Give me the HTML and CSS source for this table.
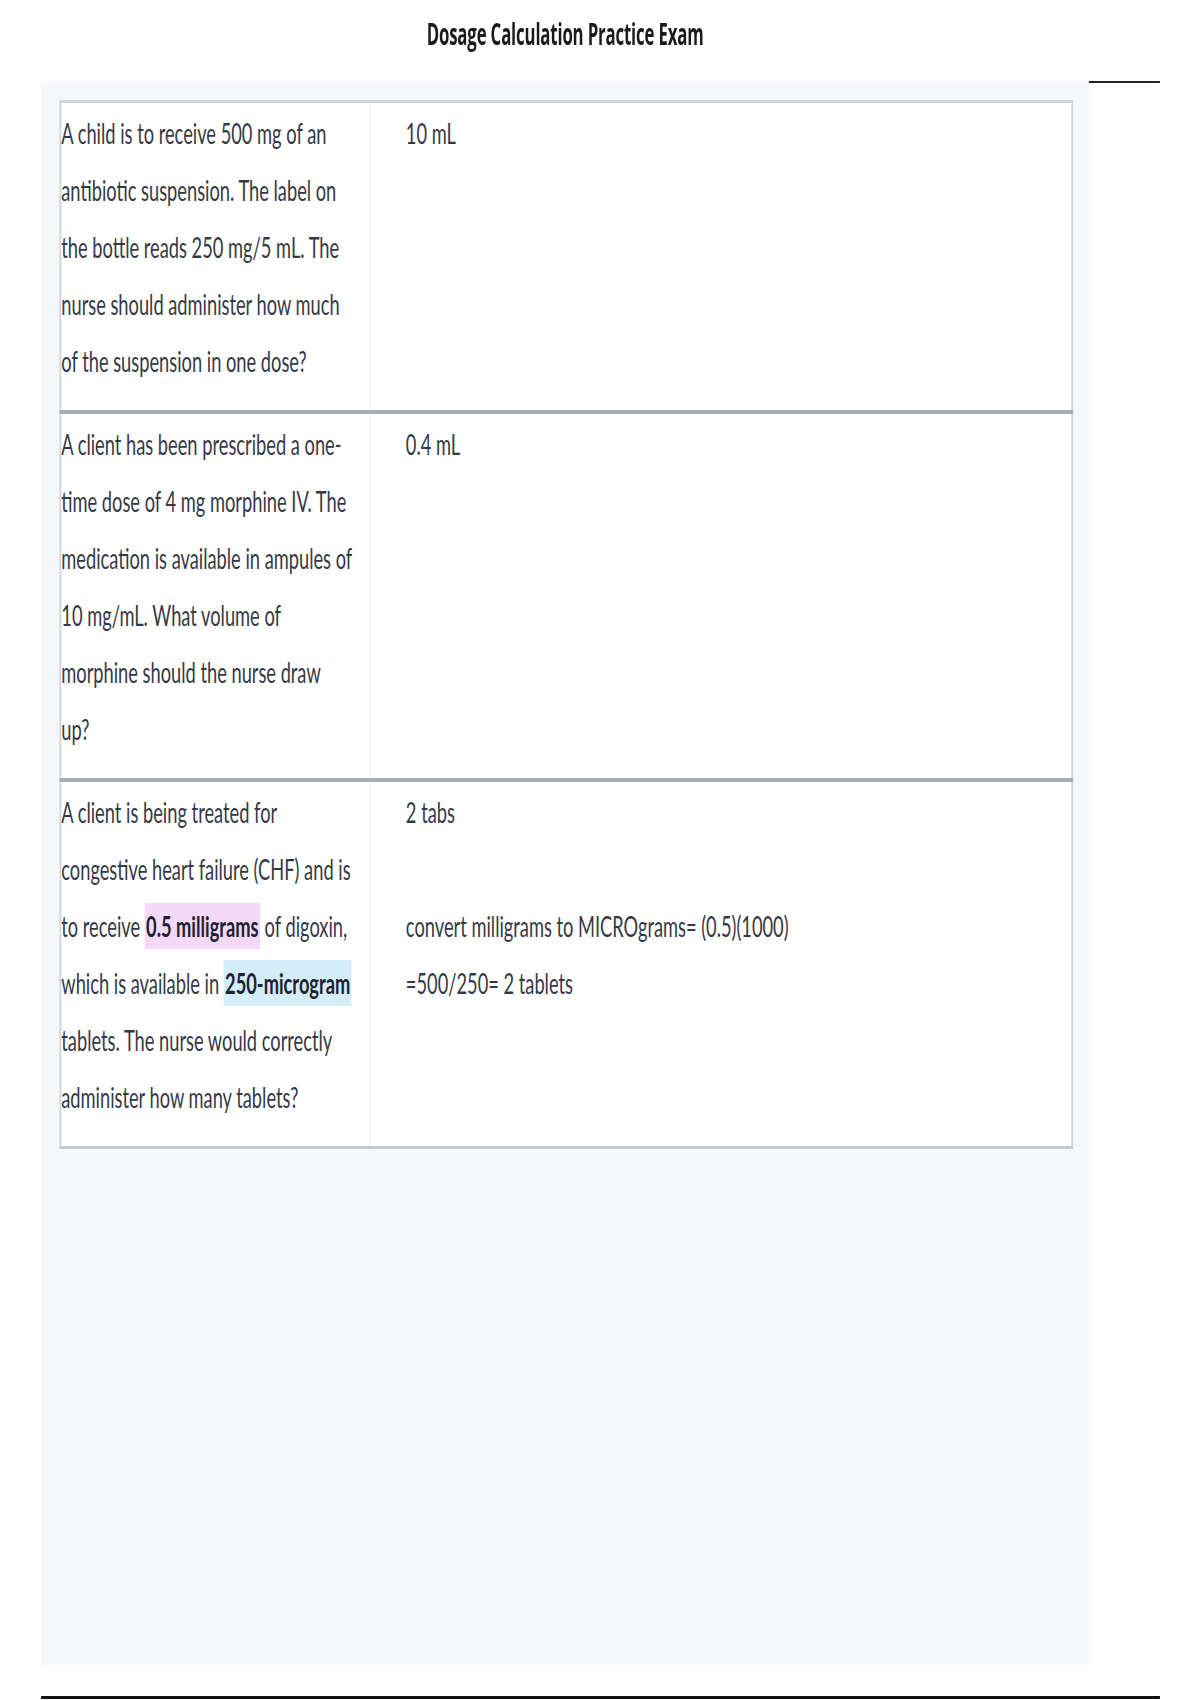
FILE: index.html
```html
<!DOCTYPE html>
<html lang="en">
<head>
  <meta charset="UTF-8">
  <title>Dosage Calculation Practice Exam</title>
  <link rel="stylesheet" href="styles.css">
</head>
<body>

  <div class="page">
    <div class="title-bar">
      <h1 class="title">Dosage Calculation Practice Exam</h1>
    </div>

    <div class="layout">
      <!-- Termos e definicoes -->
      <main class="panel">
        <table class="terms">
          <colgroup>
            <col class="col-term">
            <col class="col-def">
          </colgroup>
          <tr>
            <td class="term">A child is to receive 500 mg of an antibiotic suspension. The label on the bottle reads 250 mg/5 mL. The nurse should administer how much of the suspension in one dose?</td>
            <td class="def">10 mL</td>
          </tr>
          <tr>
            <td class="term">A client has been prescribed a one-time dose of 4 mg morphine IV. The medication is available in ampules of 10 mg/mL. What volume of morphine should the nurse draw<br>up?</td>
            <td class="def">0.4 mL</td>
          </tr>
          <tr>
            <td class="term">A client is being treated for congestive heart failure (CHF) and is to receive <b class="hl hl-pink">0.5 milligrams</b> of digoxin, which is available in <b class="hl hl-blue">250-microgram</b> tablets. The nurse would correctly administer how many tablets?</td>
            <td class="def">2 tabs<br><br>convert milligrams to MICROgrams= (0.5)(1000)<br>=500/250= 2 tablets</td>
          </tr>
        </table>
      </main>
      <div class="aside"></div>
    </div>

    <div class="footer-rule"></div>
  </div>

</body>
</html>
```

FILE: styles.css
```css
* {
  box-sizing: border-box;
}

html, body {
  margin: 0;
  padding: 0;
  background: #fff;
  overflow: hidden;
  height: 1700px;
}

/* a pagina inteira vem achatada na horizontal */
.page {
  width: 1840px;
  padding-left: 63px;
  transform: scaleX(0.652);
  transform-origin: 0 0;
  font-family: Lato, "Open Sans", sans-serif;
  color: #363945;
}

.title-bar {
  width: 1607px;
  height: 53px;
  margin-bottom: 29px;
  padding-top: 13px;
  text-align: center;
}

.title {
  display: inline-block;
  margin: 0;
  font-family: "Open Sans", sans-serif;
  font-size: 31px;
  line-height: 40px;
  font-weight: 700;
  letter-spacing: -0.3px;
  color: #1b1b1b;
  transform: scaleX(0.83);
}

.layout {
  display: flex;
  align-items: flex-start;
}

.panel {
  width: 1607px;
  height: 1583px;
  padding: 18px 24px 0 28px;
  background: #f6f7fb;
}

.aside {
  width: 109px;
  border-top: 2px solid #222;
  margin-top: -1px;
}

.footer-rule {
  width: 1716px;
  margin-top: 31px;
  border-top: 3px solid #111;
}

.terms {
  width: 100%;
  table-layout: fixed;
  border-collapse: collapse;
  background: #fff;
  border: 3px solid #d3d5db;
  border-bottom-color: #c6c9cf;
}

.col-term {
  width: 474px;
}

.terms tr {
  border-bottom: 4px solid #a9acb2;
}

.terms tr:last-child {
  border-bottom: 3px solid #c6c9cf;
}

.terms td {
  vertical-align: top;
  font-size: 28px;
  line-height: 57px;
  padding-top: 2px;
  padding-bottom: 20px;
}

.term {
  padding-left: 0;
  padding-right: 20px;
}

.def {
  padding-left: 55px;
  padding-right: 20px;
  border-left: 2px solid #f0f1f4;
}

.hl {
  font-weight: 700;
  color: #1e2230;
  padding: 6px 2px;
}

.hl-pink {
  background: #f4daf8;
}

.hl-blue {
  background: #d3eef8;
}
```
